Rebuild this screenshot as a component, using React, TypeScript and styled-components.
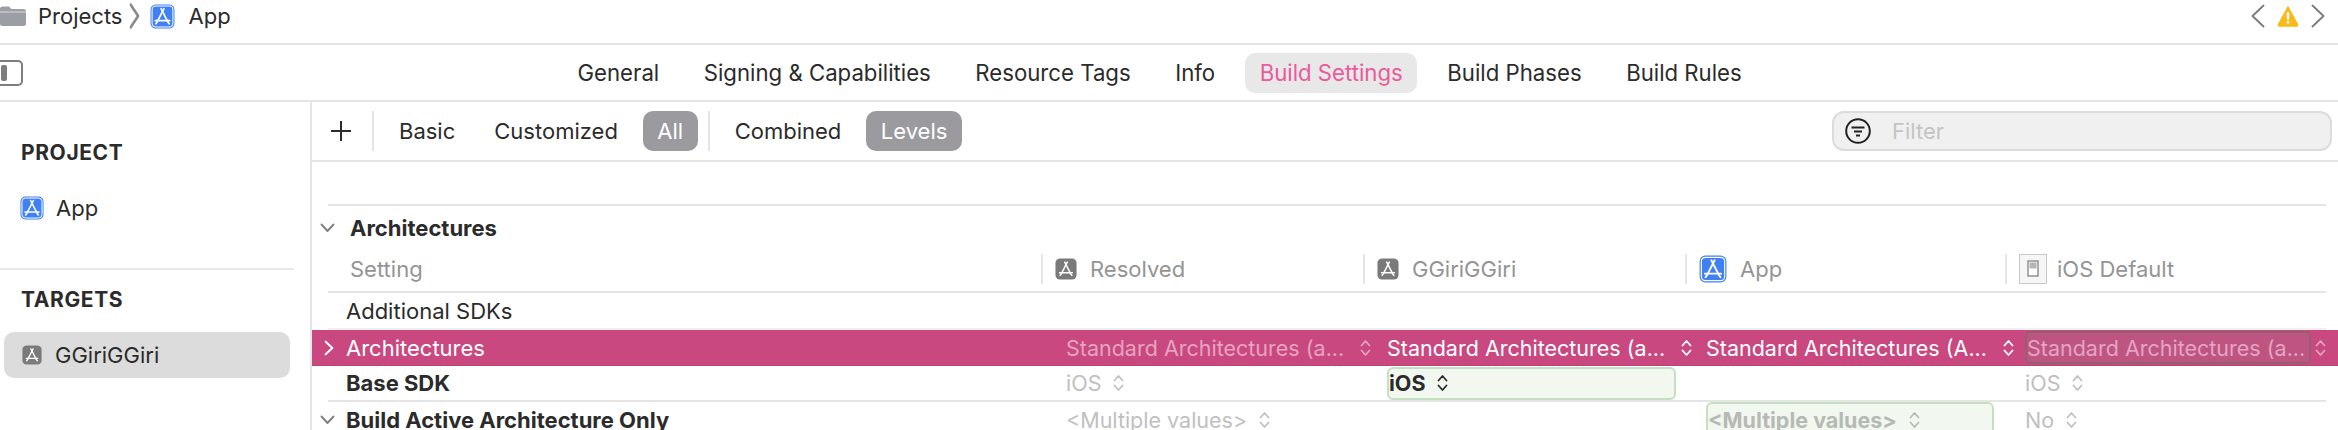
import styled, { createGlobalStyle } from "styled-components";

const GlobalStyle = createGlobalStyle`
  html, body {
    margin: 0;
    padding: 0;
    background: #fff;
    overflow: hidden;
  }
  * {
    box-sizing: border-box;
  }
`;

const Page = styled.div`
  width: 2338px;
  height: 430px;
  overflow: hidden;
  display: flex;
  flex-direction: column;
  font-family: Inter, "Liberation Sans", sans-serif;
  font-size: 22px;
  color: #2b2b2b;
`;

const PathBar = styled.div`
  flex: none;
  height: 45px;
  padding: 0 13px 11px 0;
  display: flex;
  align-items: center;
  border-bottom: 2px solid #e5e5e5;
`;
const Crumb = styled.span`
  display: flex;
  margin-left: ${props => props.$gap}px;
`;
const PathNav = styled.div`
  margin-left: auto;
  display: flex;
  align-items: center;
  gap: 12px;
`;

const TabBar = styled.div`
  flex: none;
  height: 57px;
  padding-left: 563px;
  display: flex;
  align-items: center;
  gap: 15.5px;
  border-bottom: 2px solid #e5e5e5;
  position: relative;
`;
const SidebarToggle = styled.svg`
  position: absolute;
  left: 0;
  top: 15px;
`;
const Tab = styled.div<{ $active?: boolean }>`
  height: 40px;
  padding: 0 14.5px;
  display: flex;
  align-items: center;
  border-radius: 10px;
  white-space: nowrap;
  font-size: 22.2px;
  color: ${props => (props.$active ? "#ea5a9c" : "#2b2b2b")};
  background: ${props => (props.$active ? "#e8e8e8" : "transparent")};
`;

const Main = styled.div`
  flex: 1;
  min-height: 0;
  display: flex;
`;

const Sidebar = styled.div`
  flex: none;
  width: 312px;
  border-right: 2px solid #e5e5e5;
  padding-top: 38px;
`;
const SidebarTitle = styled.div`
  padding-left: 21px;
  height: 26px;
  line-height: 26px;
  font-size: 21px;
  font-weight: 700;
  letter-spacing: 0.6px;
`;
const SidebarItem = styled.div<{ $selected?: boolean }>`
  height: 46px;
  margin-left: 4px;
  width: 286px;
  padding-left: ${props => (props.$selected ? 18 : 16)}px;
  display: flex;
  align-items: center;
  gap: ${props => (props.$selected ? 13 : 12)}px;
  border-radius: 10px;
  background: ${props => (props.$selected ? "#dcdcdc" : "transparent")};
`;
const SidebarGroup = styled.div`
  height: 130px;
  display: flex;
  flex-direction: column;
  gap: 19px;
  border-bottom: 2px solid #e8e8e8;
  width: 294px;
`;
const TargetGroup = styled.div`
  padding-top: 17px;
  display: flex;
  flex-direction: column;
  gap: 19px;
`;

const Content = styled.div`
  flex: 1;
  min-width: 0;
`;

const Toolbar = styled.div`
  height: 60px;
  padding-left: 18px;
  display: flex;
  align-items: center;
  border-bottom: 2px solid #e5e5e5;
`;
const ToolDivider = styled.div`
  width: 2px;
  height: 40px;
  background: #e5e5e5;
  margin: 0 ${props => props.$right}px 0 ${props => props.$left}px;
`;
const ScopeButton = styled.div<{ $on?: boolean }>`
  height: 40px;
  padding: 0 ${props => (props.$on ? 14.5 : 0)}px;
  margin-right: ${props => props.$gap}px;
  display: flex;
  align-items: center;
  border-radius: 10px;
  background: ${props => (props.$on ? "#9a9a9f" : "transparent")};
  color: ${props => (props.$on ? "#fff" : "#2b2b2b")};
`;
const FilterField = styled.div`
  margin-left: auto;
  margin-right: 6px;
  width: 500px;
  height: 40px;
  padding-left: 11px;
  display: flex;
  align-items: center;
  gap: 21px;
  border: 2px solid #dcdcdc;
  border-radius: 12px;
  background: #f0f0f0;
  color: #c4c4c4;
`;

const Separator = styled.div<{ $light?: boolean }>`
  height: 2px;
  margin: 0 12px 0 16px;
  background: ${props => (props.$light ? "#f0f0f0" : "#e5e5e5")};
`;
const Body = styled.div`
  padding-top: 42px;
`;
const SectionHead = styled.div`
  height: 44px;
  padding-left: 8px;
  display: flex;
  align-items: center;
  gap: 15px;
  font-weight: 700;
`;
const ColumnHead = styled.div`
  height: 41px;
  padding-bottom: 3px;
  display: grid;
  grid-template-columns: 729px 322px 322px 320px 333px;
  align-items: center;
  color: #949494;
`;
const HeadCell = styled.div<{ $first?: boolean; $tight?: boolean }>`
  height: 30px;
  padding-left: ${props => (props.$first ? 38 : 12)}px;
  display: flex;
  align-items: center;
  gap: ${props => (props.$tight ? 10 : 13)}px;
  border-left: ${props => (props.$first ? "none" : "2px solid #e5e5e5")};
`;

const SettingRow = styled.div<{ $picked?: boolean; $height: number }>`
  height: ${props => props.$height}px;
  display: grid;
  grid-template-columns: 754px 321px 319px 319px 313px;
  align-items: center;
  background: ${props => (props.$picked ? "#c8487f" : "transparent")};
  border-bottom: ${props => (props.$picked ? "1px solid #b94376" : "none")};
  color: ${props => (props.$picked ? "#fff" : "#2b2b2b")};
`;
const SettingName = styled.div<{ $bold?: boolean }>`
  display: flex;
  align-items: center;
  font-weight: ${props => (props.$bold ? 700 : 400)};
  white-space: nowrap;
`;
const Disclosure = styled.div<{ $inset?: number }>`
  width: 34px;
  flex: none;
  display: flex;
  padding-left: ${props => props.$inset ?? 0}px;
`;
const ValueCell = styled.div<{ $tone?: "set" | "dim" | "pickedDim" | "boldDim"; $gap?: number }>`
  display: flex;
  align-items: center;
  gap: ${props => props.$gap ?? 12}px;
  white-space: nowrap;
  font-size: 21.5px;
  font-weight: ${props => (props.$tone === "set" || props.$tone === "boldDim" ? 700 : 400)};
  color: ${props =>
    props.$tone === "dim"
      ? "#c0c0c0"
      : props.$tone === "pickedDim"
      ? "#e6a3c0"
      : props.$tone === "boldDim"
      ? "#b5bab5"
      : "inherit"};
`;
const Highlight = styled.div<{ $width: number; $height: number }>`
  width: ${props => props.$width}px;
  height: ${props => props.$height}px;
  flex: none;
  display: flex;
  align-items: center;
  gap: 12px;
  border-radius: 6px;
  border: 2px solid #c4e0c0;
  background: #f2f7f0;
`;
const OutlineBox = styled.div`
  width: 286px;
  height: 33px;
  flex: none;
  display: flex;
  align-items: center;
  border-radius: 5px;
  border: 2px solid #94606f;
  background: #bd5580;
  overflow: hidden;
`;

function AppGlyph({ size, plate }: { size: number; plate: "blue" | "gray" }) {
  const blue = plate === "blue";
  return (
    <svg width={size} height={size} viewBox="0 0 24 24" style={{ flex: "none" }}>
      <rect x="0.5" y="0.5" width="23" height="23" rx="5" fill={blue ? "#3f80f5" : "#7a7a7a"} />
      {blue && <rect x="2" y="2" width="20" height="20" rx="3.5" fill="none" stroke="#fff" strokeWidth="1" />}
      <g stroke="#fff" strokeWidth="1.6" strokeLinecap="round" fill="none">
        <path d="M13.4 4.5 L7 17" />
        <path d="M10.6 4.5 L17 17" />
        <path d="M5 16 H19" />
        <path d="M5.6 19 L7 17" />
        <path d="M18.4 19 L17 17" />
      </g>
    </svg>
  );
}

function DefaultsGlyph() {
  return (
    <svg width="28" height="30" viewBox="0 0 28 30" style={{ flex: "none" }}>
      <rect x="0.5" y="0.5" width="27" height="29" fill="#f6f6f6" stroke="#c9c9c9" />
      <rect x="9" y="7" width="10" height="15" fill="#fff" stroke="#8a8a8a" strokeWidth="1.4" />
      <rect x="10.5" y="8.5" width="7" height="6" fill="#b5b5b5" />
    </svg>
  );
}

function Stepper({ color = "currentColor" }: { color?: string }) {
  return (
    <svg width="11" height="18" viewBox="0 0 11 18" style={{ flex: "none" }}>
      <path d="M1.5 6.5 L5.5 2 L9.5 6.5 M1.5 11.5 L5.5 16 L9.5 11.5" fill="none" stroke={color} strokeWidth="1.8" strokeLinecap="round" strokeLinejoin="round" />
    </svg>
  );
}

function ChevronRight({ color, w = 10, h = 16 }: { color: string; w?: number; h?: number }) {
  return (
    <svg width={w} height={h} viewBox="0 0 9 14" preserveAspectRatio="none" style={{ flex: "none" }}>
      <path d="M1.5 1.5 L7.5 7 L1.5 12.5" fill="none" stroke={color} strokeWidth="1.8" strokeLinecap="round" strokeLinejoin="round" />
    </svg>
  );
}

function ChevronDown() {
  return (
    <svg width="15" height="10" viewBox="0 0 15 10" style={{ flex: "none" }}>
      <path d="M1.5 1.5 L7.5 8 L13.5 1.5" fill="none" stroke="#808080" strokeWidth="1.9" strokeLinecap="round" strokeLinejoin="round" />
    </svg>
  );
}

function ChevronLeft() {
  return (
    <svg width="14" height="24" viewBox="0 0 14 24" style={{ flex: "none" }}>
      <path d="M12.5 1.5 L1.5 12 L12.5 22.5" fill="none" stroke="#7d7d7d" strokeWidth="1.9" strokeLinecap="round" strokeLinejoin="round" />
    </svg>
  );
}

function Warning() {
  return (
    <svg width="22" height="22" viewBox="0 0 22 22" style={{ flex: "none" }}>
      <path d="M11 2 L20.5 19.5 Q21 21 19.5 21 H2.5 Q1 21 1.5 19.5 Z" fill="#fbb918" stroke="#fbb918" strokeWidth="1.5" strokeLinejoin="round" />
      <rect x="9.8" y="7" width="2.4" height="8" rx="1.1" fill="#fff" />
      <circle cx="11" cy="17.5" r="1.4" fill="#fff" />
    </svg>
  );
}

function Folder() {
  return (
    <svg width="26" height="20" viewBox="0 0 26 20" style={{ flex: "none" }}>
      <path d="M0 3 Q0 0.5 2.5 0.5 H9 L11.5 3 H23.5 Q26 3 26 5.5 V17.5 Q26 20 23.5 20 H2.5 Q0 20 0 17.5 Z" fill="#9b9fa3" />
      <path d="M0 6 H26" stroke="#d6d8da" strokeWidth="1" />
    </svg>
  );
}

function App() {
  return (
    <>
      <GlobalStyle />
      <Page>
        <PathBar>
          <Folder />
          <Crumb $gap={12}>Projects</Crumb>
          <Crumb $gap={7}>
            <ChevronRight color="#8a8a8a" w={11} h={28} />
          </Crumb>
          <Crumb $gap={10}>
            <AppGlyph size={25} plate="blue" />
          </Crumb>
          <Crumb $gap={13}>App</Crumb>
          <PathNav>
            <ChevronLeft />
            <Warning />
            <span style={{ transform: "scaleX(-1)", display: "flex" }}>
              <ChevronLeft />
            </span>
          </PathNav>
        </PathBar>

        <TabBar>
          <SidebarToggle width="24" height="26" viewBox="0 0 24 26">
            <rect x="-6" y="1" width="28" height="24" rx="4" fill="none" stroke="#7d7d7d" strokeWidth="2" />
            <rect x="1" y="5" width="6" height="16" rx="2" fill="#7d7d7d" />
          </SidebarToggle>
          <Tab>General</Tab>
          <Tab>Signing & Capabilities</Tab>
          <Tab>Resource Tags</Tab>
          <Tab>Info</Tab>
          <Tab $active>Build Settings</Tab>
          <Tab>Build Phases</Tab>
          <Tab>Build Rules</Tab>
        </TabBar>

        <Main>
          <Sidebar>
            <SidebarGroup>
              <SidebarTitle>PROJECT</SidebarTitle>
              <SidebarItem>
                <AppGlyph size={24} plate="blue" />
                App
              </SidebarItem>
            </SidebarGroup>
            <TargetGroup>
              <SidebarTitle>TARGETS</SidebarTitle>
              <SidebarItem $selected>
                <AppGlyph size={20} plate="gray" />
                GGiriGGiri
              </SidebarItem>
            </TargetGroup>
          </Sidebar>

          <Content>
            <Toolbar>
              <svg width="22" height="22" viewBox="0 0 22 22" style={{ flex: "none" }}>
                <path d="M11 1 V21 M1 11 H21" stroke="#2b2b2b" strokeWidth="2" />
              </svg>
              <ToolDivider $left={20} $right={25} />
              <ScopeButton $gap={39}>Basic</ScopeButton>
              <ScopeButton $gap={25}>Customized</ScopeButton>
              <ScopeButton $on $gap={0}>All</ScopeButton>
              <ToolDivider $left={10} $right={25} />
              <ScopeButton $gap={25}>Combined</ScopeButton>
              <ScopeButton $on $gap={0}>Levels</ScopeButton>
              <FilterField>
                <svg width="26" height="26" viewBox="0 0 26 26" style={{ flex: "none" }}>
                  <circle cx="13" cy="13" r="11.8" fill="none" stroke="#222" strokeWidth="2" />
                  <path d="M6.5 9.5 H19.5 M9 13.5 H17 M11 17.5 H15" stroke="#222" strokeWidth="2" />
                </svg>
                Filter
              </FilterField>
            </Toolbar>

            <Body>
              <Separator />
              <SectionHead>
                <ChevronDown />
                Architectures
              </SectionHead>
              <ColumnHead>
                <HeadCell $first>Setting</HeadCell>
                <HeadCell>
                  <AppGlyph size={22} plate="gray" />
                  Resolved
                </HeadCell>
                <HeadCell>
                  <AppGlyph size={22} plate="gray" />
                  GGiriGGiri
                </HeadCell>
                <HeadCell>
                  <AppGlyph size={28} plate="blue" />
                  App
                </HeadCell>
                <HeadCell $tight>
                  <DefaultsGlyph />
                  iOS Default
                </HeadCell>
              </ColumnHead>
              <Separator />

              <SettingRow $height={35}>
                <SettingName>
                  <Disclosure />
                  Additional SDKs
                </SettingName>
              </SettingRow>
              <Separator $light />

              <SettingRow $picked $height={36}>
                <SettingName>
                  <Disclosure $inset={12}>
                    <ChevronRight color="#fff" />
                  </Disclosure>
                  Architectures
                </SettingName>
                <ValueCell $tone="pickedDim" $gap={16}>
                  Standard Architectures (a...
                  <Stepper />
                </ValueCell>
                <ValueCell $gap={16}>
                  Standard Architectures (a...
                  <Stepper />
                </ValueCell>
                <ValueCell $gap={16}>
                  Standard Architectures (A...
                  <Stepper />
                </ValueCell>
                <ValueCell $tone="pickedDim" $gap={4}>
                  <OutlineBox>Standard Architectures (a...</OutlineBox>
                  <Stepper />
                </ValueCell>
              </SettingRow>

              <SettingRow $height={34}>
                <SettingName $bold>
                  <Disclosure />
                  Base SDK
                </SettingName>
                <ValueCell $tone="dim">
                  iOS
                  <Stepper />
                </ValueCell>
                <ValueCell $tone="set">
                  <Highlight $width={289} $height={33}>
                    iOS
                    <Stepper />
                  </Highlight>
                </ValueCell>
                <div />
                <ValueCell $tone="dim">
                  iOS
                  <Stepper />
                </ValueCell>
              </SettingRow>
              <Separator />

              <SettingRow $height={36}>
                <SettingName $bold>
                  <Disclosure $inset={8}>
                    <ChevronDown />
                  </Disclosure>
                  Build Active Architecture Only
                </SettingName>
                <ValueCell $tone="dim">
                  {"<Multiple values>"}
                  <Stepper />
                </ValueCell>
                <div />
                <ValueCell $tone="boldDim">
                  <Highlight $width={288} $height={36}>
                    {"<Multiple values>"}
                    <Stepper />
                  </Highlight>
                </ValueCell>
                <ValueCell $tone="dim">
                  No
                  <Stepper />
                </ValueCell>
              </SettingRow>
            </Body>
          </Content>
        </Main>
      </Page>
    </>
  );
}

export default App;
